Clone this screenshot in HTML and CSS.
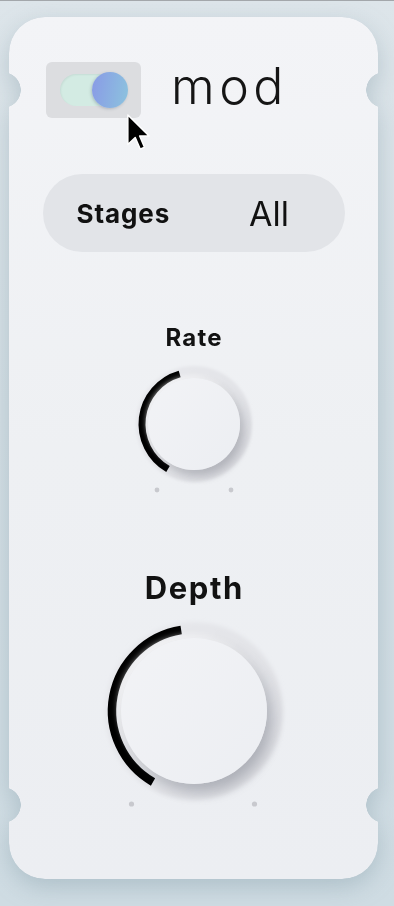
FILE: index.html
```html
<!DOCTYPE html>
<html>
<head>
<meta charset="utf-8">
<link rel="stylesheet" href="styles.css">
</head>
<body>
<div class="stage">
  <div class="card-shadow">
    <div class="card">
      <div class="header">
        <div class="toggle-box">
          <div class="track"><div class="thumb"></div></div>
          <svg class="cursor" viewBox="0 0 13 21" width="24" height="39">
            <path d="M1 1 L1 17 L5 13.2 L7.7 19.5 L10 18.5 L7.4 12.4 L12.5 12.4 Z" fill="#000" stroke="#fff" stroke-width="0.8" stroke-linejoin="round"/>
          </svg>
        </div>
        <div class="title">mod</div>
      </div>

      <div class="pill">
        <span class="pill-label">Stages</span>
        <span class="pill-value">All</span>
      </div>

      <div class="control rate">
        <div class="label">Rate</div>
        <div class="knob">
          <svg viewBox="0 0 140 140" width="140" height="140">
            <defs>
              <linearGradient id="ringA" x1="0" y1="0" x2="1" y2="1">
                <stop offset="0%" stop-color="#e8e9ed"/>
                <stop offset="55%" stop-color="#e2e3e7"/>
                <stop offset="100%" stop-color="#d8d9de"/>
              </linearGradient>
              <filter id="softA" x="-20%" y="-20%" width="140%" height="140%">
                <feGaussianBlur stdDeviation="1.6"/>
              </filter>
            </defs>
            <circle cx="70" cy="70" r="58" fill="url(#ringA)" filter="url(#softA)"/>
            <path d="M44 115.03 A52 52 0 0 1 55.67 20.01" fill="none" stroke="#000" stroke-width="7"/>
            <circle cx="33" cy="136" r="2.4" fill="#c8c9ce"/>
            <circle cx="107" cy="136" r="2.4" fill="#c8c9ce"/>
          </svg>
          <div class="cap"></div>
        </div>
      </div>

      <div class="control depth">
        <div class="label">Depth</div>
        <div class="knob">
          <svg viewBox="0 0 200 200" width="200" height="200">
            <defs>
              <linearGradient id="ringB" x1="0" y1="0" x2="1" y2="1">
                <stop offset="0%" stop-color="#e8e9ed"/>
                <stop offset="55%" stop-color="#e2e3e7"/>
                <stop offset="100%" stop-color="#d8d9de"/>
              </linearGradient>
              <filter id="softB" x="-20%" y="-20%" width="140%" height="140%">
                <feGaussianBlur stdDeviation="2"/>
              </filter>
            </defs>
            <circle cx="100" cy="100" r="89" fill="url(#ringB)" filter="url(#softB)"/>
            <path d="M59 171.01 A82 82 0 0 1 87.17 19.01" fill="none" stroke="#000" stroke-width="8.5"/>
            <circle cx="37.5" cy="193" r="2.6" fill="#c8c9ce"/>
            <circle cx="160.5" cy="193" r="2.6" fill="#c8c9ce"/>
          </svg>
          <div class="cap"></div>
        </div>
      </div>
    </div>
  </div>
</div>
</body>
</html>
```

FILE: styles.css
```css
* { box-sizing: border-box; }

html, body { margin: 0; padding: 0; }

body {
  width: 394px;
  height: 906px;
  overflow: hidden;
  background: linear-gradient(180deg, #dde5ea 0%, #d4dfe5 45%, #cfdce3 100%);
  border-top: 1px solid #a3a7ab;
  font-family: Inter, "Noto Sans", sans-serif;
  color: #111;
}

.stage {
  padding: 16px 16px 0 9px;
}

.card-shadow {
  filter: drop-shadow(0 8px 12px rgba(95, 125, 140, 0.3));
}

.card {
  width: 369px;
  height: 862px;
  border-radius: 36px;
  background: linear-gradient(180deg, #f3f4f7 0%, #eef0f3 50%, #eceef2 100%);
  display: flex;
  flex-direction: column;
  align-items: center;
  padding-top: 45px;
  -webkit-mask-image:
    radial-gradient(circle at -6px 73px, transparent 17.5px, #000 18px),
    radial-gradient(circle at calc(100% + 6px) 73px, transparent 17.5px, #000 18px),
    radial-gradient(circle at -6px 788px, transparent 17.5px, #000 18px),
    radial-gradient(circle at calc(100% + 6px) 788px, transparent 17.5px, #000 18px);
  -webkit-mask-composite: source-in;
  mask-image:
    radial-gradient(circle at -6px 73px, transparent 17.5px, #000 18px),
    radial-gradient(circle at calc(100% + 6px) 73px, transparent 17.5px, #000 18px),
    radial-gradient(circle at -6px 788px, transparent 17.5px, #000 18px),
    radial-gradient(circle at calc(100% + 6px) 788px, transparent 17.5px, #000 18px);
  mask-composite: intersect;
}

/* header */
.header {
  align-self: flex-start;
  margin-left: 37px;
  display: flex;
  align-items: flex-start;
  gap: 30px;
  height: 56px;
}

.toggle-box {
  position: relative;
  width: 95px;
  height: 56px;
  border-radius: 6px;
  background: #dcdde0;
  display: flex;
  align-items: center;
  padding-left: 14px;
}

.track {
  width: 66px;
  height: 32px;
  border-radius: 16px;
  background: #d3ebe3;
  display: flex;
  align-items: center;
  box-shadow: inset 1px 1px 2px rgba(0, 0, 0, 0.06);
}

.thumb {
  width: 36px;
  height: 36px;
  border-radius: 50%;
  margin-left: auto;
  margin-right: -2px;
  background: linear-gradient(100deg, #899ae6 0%, #8cc3de 100%);
  box-shadow: -1px 1px 3px rgba(60, 70, 90, 0.25);
}

.cursor {
  position: absolute;
  left: 80px;
  top: 51px;
}

.title {
  font-weight: 300;
  font-size: 50px;
  line-height: 56px;
  letter-spacing: 4.5px;
  margin-top: -4px;
  color: #151515;
}

/* stages pill */
.pill {
  margin-top: 56px;
  width: 302px;
  height: 78px;
  border-radius: 39px;
  background: #e2e4e8;
  display: grid;
  grid-template-columns: 1fr 1fr;
  align-items: center;
  padding-top: 2px;
}

.pill-label {
  padding-left: 34px;
  font-weight: 700;
  font-size: 26px;
  line-height: 32px;
  letter-spacing: 0.9px;
}

.pill-value {
  text-align: center;
  font-size: 34px;
  line-height: 40px;
  font-weight: 400;
}

/* knobs */
.control {
  display: flex;
  flex-direction: column;
  align-items: center;
}

.rate { margin-top: 72px; }
.depth { margin-top: 77px; }

.label {
  font-weight: 700;
  color: #121212;
}

.rate .label {
  font-size: 24px;
  line-height: 28px;
  letter-spacing: 1.2px;
  padding-left: 1.2px;
}

.depth .label {
  font-size: 31px;
  line-height: 34px;
  letter-spacing: 1.6px;
  padding-left: 1.6px;
}

.knob {
  display: grid;
}

.knob > * {
  grid-area: 1 / 1;
}

.rate .knob { margin-top: 2px; }
.depth .knob { margin-top: 6px; }

.cap {
  place-self: center;
  border-radius: 50%;
  background: linear-gradient(135deg, #f2f3f6 0%, #eceef2 100%);
  box-shadow: 4px 6px 10px rgba(40, 45, 60, 0.24), -2px -2px 5px rgba(255, 255, 255, 0.6);
}

.rate .cap {
  width: 92px;
  height: 92px;
}

.depth .cap {
  width: 146px;
  height: 146px;
  box-shadow: 5px 8px 13px rgba(40, 45, 60, 0.26), -3px -3px 6px rgba(255, 255, 255, 0.6);
}
```
